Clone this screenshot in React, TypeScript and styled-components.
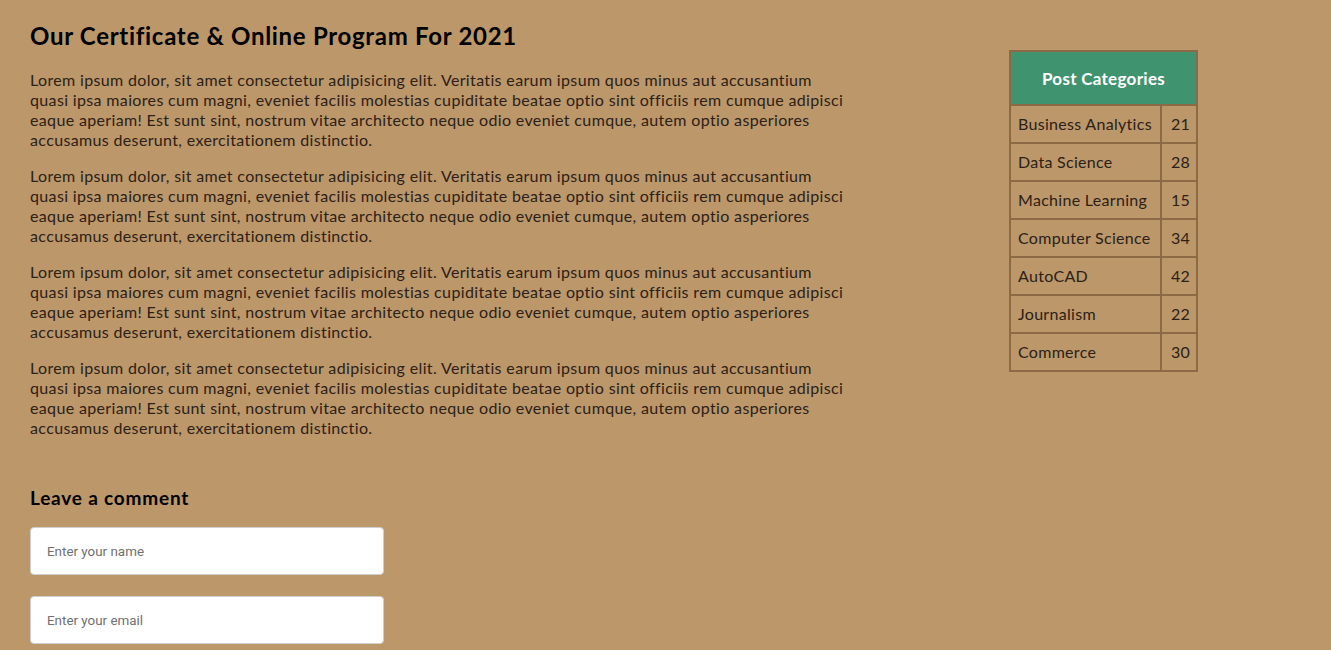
import React from "react";
import styled, { createGlobalStyle } from "styled-components";

const GlobalStyle = createGlobalStyle`
  html, body { margin: 0; padding: 0; background: #bc976a; }
  body { font-family: "Lato", "Noto Sans", sans-serif; }
  * { box-sizing: border-box; }
`;

const Page = styled.div`
  display: flex;
  align-items: flex-start;
  padding: 20px 0 0 30px;
  min-height: 650px;
  background: #bc976a;
`;

const Main = styled.main`
  width: 823px;
  flex: none;
`;

const Title = styled.h1`
  margin: 0 0 18px;
  font-size: 24px;
  line-height: 32px;
  font-weight: 700;
  letter-spacing: 0.7px;
  color: #000;
`;

const Para = styled.p`
  margin: 0 0 16px;
  font-size: 16px;
  line-height: 20px;
  letter-spacing: 0.35px;
  color: #2b2117;
`;

const CommentTitle = styled.h3`
  margin: 48px 0 17px;
  font-size: 19px;
  line-height: 24px;
  font-weight: 700;
  letter-spacing: 0.8px;
  color: #000;
`;

const Form = styled.form`
  display: flex;
  flex-direction: column;
  gap: 21px;
`;

const Input = styled.input`
  width: 354px;
  height: 48px;
  border: 1px solid #cfcfcf;
  border-radius: 4px;
  background: #fff;
  padding: 0 16px;
  font-family: Roboto, "Liberation Sans", sans-serif;
  font-size: 13.4px;
  color: #333;
  outline: none;
  &::placeholder { color: #6f6f6f; }
`;

const Aside = styled.aside`
  margin: 30px 0 0 156px;
  width: 189px;
`;

const Table = styled.table`
  width: 189px;
  border-collapse: collapse;
  border: 2px solid #8c6a45;
`;

const HeadCell = styled.th`
  height: 54px;
  background: #40936f;
  color: #fff;
  font-size: 17px;
  font-weight: 700;
  letter-spacing: 0.3px;
  text-align: center;
  border: 2px solid #8c6a45;
  padding: 0;
`;

const Cell = styled.td<{ $num?: boolean }>`
  height: 38px;
  border: 2px solid #8c6a45;
  padding: 0 0 1px ${(p) => (p.$num ? "9px" : "7px")};
  font-size: 16px;
  letter-spacing: 0.3px;
  color: #2b2117;
  white-space: nowrap;
  width: ${(p) => (p.$num ? "36px" : "auto")};
`;

const text =
  "Lorem ipsum dolor, sit amet consectetur adipisicing elit. Veritatis earum ipsum quos minus aut accusantium quasi ipsa maiores cum magni, eveniet facilis molestias cupiditate beatae optio sint officiis rem cumque adipisci eaque aperiam! Est sunt sint, nostrum vitae architecto neque odio eveniet cumque, autem optio asperiores accusamus deserunt, exercitationem distinctio.";

const categories: [string, number][] = [
  ["Business Analytics", 21],
  ["Data Science", 28],
  ["Machine Learning", 15],
  ["Computer Science", 34],
  ["AutoCAD", 42],
  ["Journalism", 22],
  ["Commerce", 30],
];

export default function App() {
  return (
    <>
      <GlobalStyle />
      <Page>
        <Main>
          <Title>Our Certificate &amp; Online Program For 2021</Title>
          {[0, 1, 2, 3].map((i) => (
            <Para key={i}>{text}</Para>
          ))}
          <CommentTitle>Leave a comment</CommentTitle>
          <Form onSubmit={(e) => e.preventDefault()}>
            <Input placeholder="Enter your name" />
            <Input placeholder="Enter your email" />
          </Form>
        </Main>
        <Aside>
          <Table>
            <thead>
              <tr>
                <HeadCell colSpan={2}>Post Categories</HeadCell>
              </tr>
            </thead>
            <tbody>
              {categories.map(([name, n]) => (
                <tr key={name}>
                  <Cell>{name}</Cell>
                  <Cell $num>{n}</Cell>
                </tr>
              ))}
            </tbody>
          </Table>
        </Aside>
      </Page>
    </>
  );
}
